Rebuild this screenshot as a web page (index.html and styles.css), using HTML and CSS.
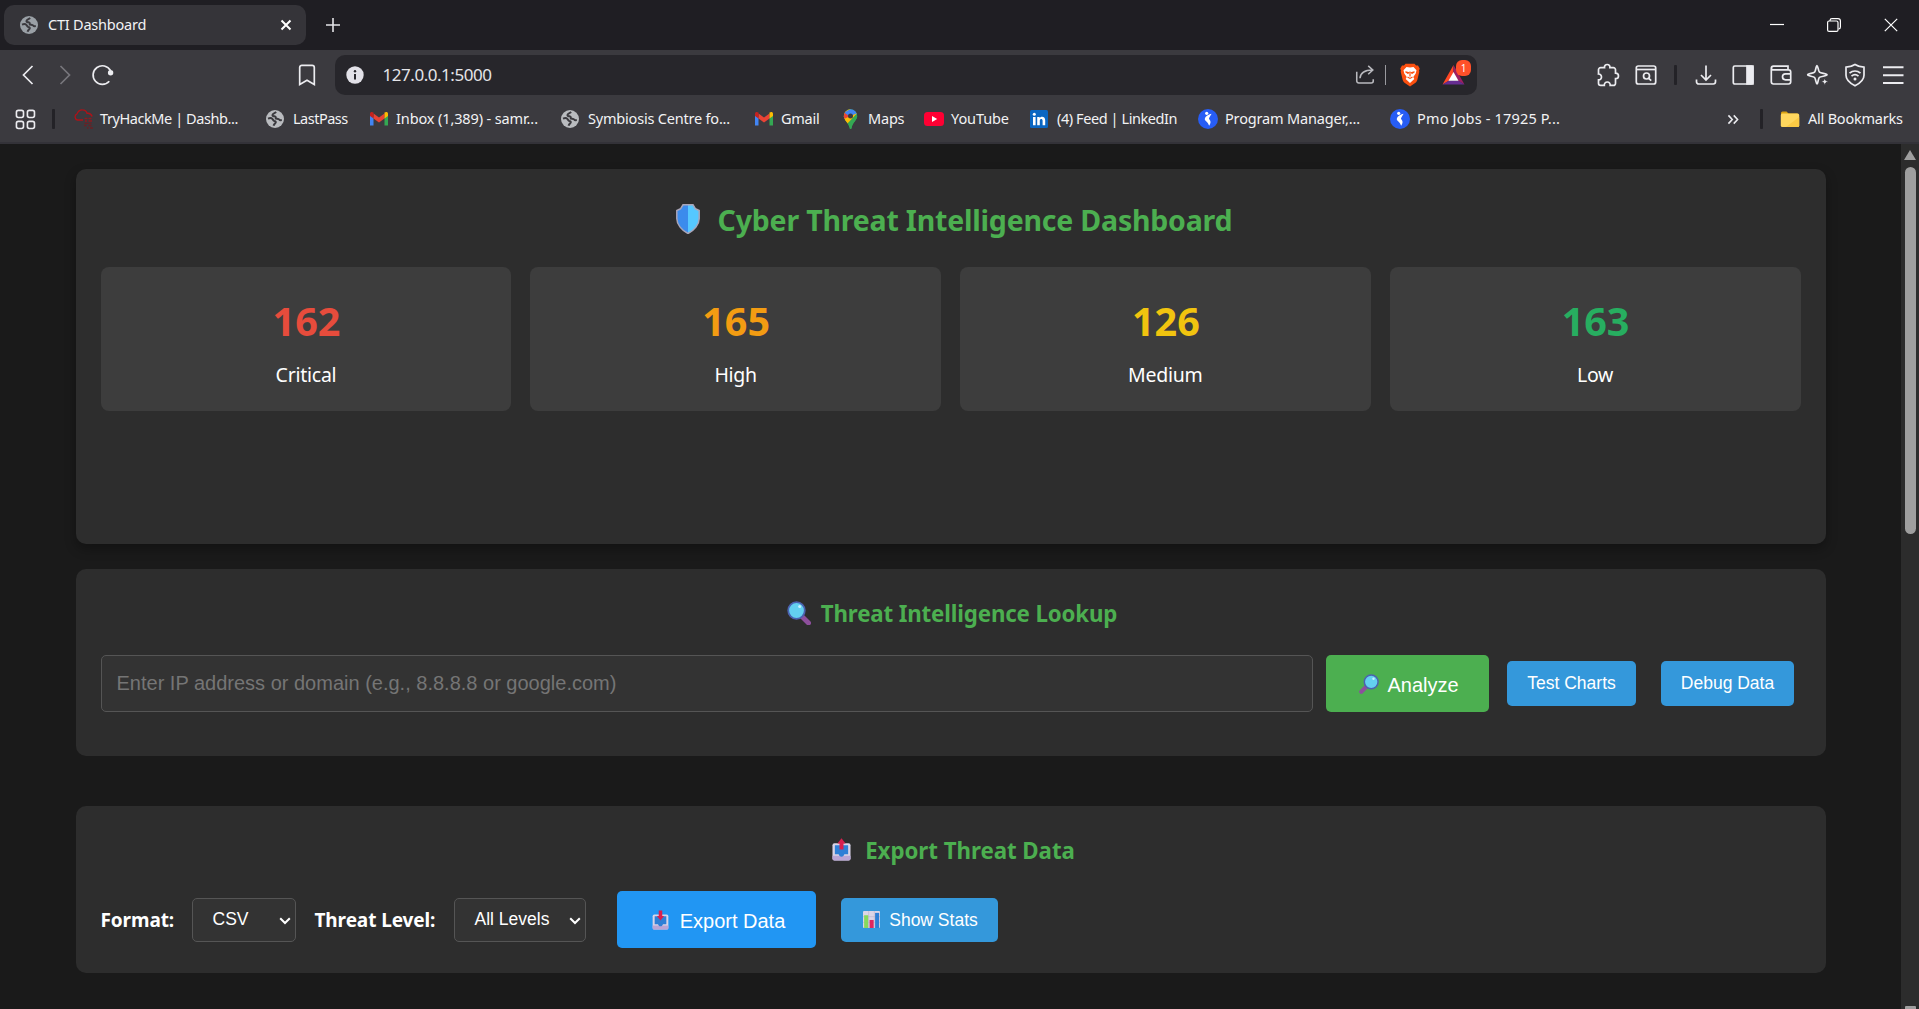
FILE: index.html
```html
<!DOCTYPE html>
<html lang="en">
<head>
<meta charset="utf-8">
<title>CTI Dashboard</title>
<link rel="stylesheet" href="styles.css">
</head>
<body>
<svg class="defs" aria-hidden="true">
  <symbol id="globe" viewBox="0 0 18 18"><circle cx="9" cy="9" r="9" fill="currentColor"/><path d="M10.2 2C8.700 3.200 7.200 3.300 6.600 4.600c-.5 1.200.6 1.700 1.900 1.700 1.200.1 1.400 1.100 1.300 2.200 1.600.3 2.700-.1 3.400 1 .5.9 1.600.8 2.600.6M2 8.600c1.500-.6 3.400-.7 4.400.3 1 .9.7 1.800 2 2 1.600.2 1.700 1.200.9 2.200-.7.9-1.400 1.200-1.700 2.700" fill="none" stroke="#3b3a3f" stroke-width="2"/></symbol>
  <symbol id="gmail" viewBox="0 0 20 16"><path d="M1 3v11.500h3.500V6L1 3z" fill="#4285f4"/><path d="M19 3v11.500h-3.500V6L19 3z" fill="#34a853"/><path d="M4.500 2.500v5L10 11.500l5.500-4v-5L10 6.600 4.500 2.500z" fill="#ea4335"/><path d="M1 2.500C1 1 3 .3 4.500 1.600v6L1 5V2.500z" fill="#c5221f"/><path d="M19 2.500C19 1 17 .3 15.500 1.600v6L19 5V2.500z" fill="#fbbc04"/></symbol>
  <symbol id="job" viewBox="0 0 20 20"><circle cx="10" cy="10" r="10" fill="#275df5"/><circle cx="8.700" cy="4.300" r="1.600" fill="#fff"/><path d="M13.500 4.800c-3.500.8-6.300 2.700-6.700 5-.2 1.500.9 2.300 2.300 3.400 1 .9 1.300 2.200 2.100 3.600 1.500-2.300 1.900-4.700.4-6.100-1.600-1.400.8-3.200 1.900-5.900z" fill="#fff"/></symbol>
  <symbol id="tray" viewBox="0 0 20 20"><rect x=".5" y="1.500" width="19" height="18" rx="2" fill="#d9d3e6"/><path d="M.5 14.500h19v3a2 2 0 0 1-2 2h-15a2 2 0 0 1-2-2z" fill="#b9a5d6"/><path d="M3 3.500h14V13h-4c-.5 1.500-1.500 2.500-3 2.500S7.500 14.500 7 13H3z" fill="#2e7fd6"/></symbol>
</svg>

<header class="browser">
  <div class="tabs">
    <div class="tab">
      <svg class="tab-icon"><use href="#globe"/></svg>
      <span class="tab-title">CTI Dashboard</span>
      <svg class="tab-close" viewBox="0 0 12 12"><path d="M1.500 1.500l9 9m0-9l-9 9"/></svg>
    </div>
    <svg class="tab-new" viewBox="0 0 14 14"><path d="M7 0v14M0 7h14"/></svg>
    <div class="win">
      <svg viewBox="0 0 14 14"><path d="M0 6.500h14"/></svg>
      <svg viewBox="0 0 14 14"><path d="M3 3V2.500A2 2 0 0 1 5 .6h6a2.400 2.400 0 0 1 2.400 2.400v6a2 2 0 0 1-1.900 2"/><rect x=".6" y="3" width="10.400" height="10.400" rx="1.500"/></svg>
      <svg viewBox="0 0 14 14"><path d="M.8.8l12.400 12.400m0-12.400L.8 13.200"/></svg>
    </div>
  </div>

  <div class="toolbar">
    <div class="nav">
      <svg class="ic" viewBox="0 0 24 24"><path d="M16.500 3L7.500 12l9 9"/></svg>
      <svg class="ic dim" viewBox="0 0 24 24"><path d="M7.500 3l9 9-9 9"/></svg>
      <svg class="ic" viewBox="0 0 24 24"><path d="M18.300 18.300A9.300 9.300 0 1 1 19.500 7.500"/><circle cx="19.600" cy="9.800" r="2.700" fill="currentColor" stroke="none"/></svg>
    </div>
    <svg class="ic mark" viewBox="0 0 24 24"><path d="M4.700 4.500A2.200 2.200 0 0 1 6.900 2.300h10.200a2.200 2.200 0 0 1 2.200 2.200v17L12 17.300 4.700 21.500z"/></svg>
    <div class="url">
      <svg class="info" viewBox="0 0 18 18"><circle cx="9" cy="9" r="8.700" fill="#e2e1e8"/><path d="M9 8v5.500" stroke="#27262b" stroke-width="2"/><circle cx="9" cy="5.300" r="1.200" fill="#27262b"/></svg>
      <span class="address">127.0.0.1:5000</span>
      <svg class="ic share" viewBox="0 0 24 24"><path d="M3 8.500V18.500A2.200 2.200 0 0 0 5.200 20.700h13.600a2.200 2.200 0 0 0 2.200-2.200v-2M6.500 15.500c.5-5 4.500-9 13.500-9M15.500 2l5 4.600-5 4.600"/></svg>
      <i class="url-sep"></i>
      <svg class="lion" viewBox="0 0 20 24"><path d="M5.500.8h9l1.500 1.800 2-.1 1.700 3-.7 2.300.3 1-2 8.200c-.3 1.200-1 2-1.800 2.700L10 23.500l-5.500-3.800c-.8-.7-1.500-1.500-1.800-2.700L.7 8.800l.3-1L.3 5.500l1.700-3 2 .1z" fill="#fb5010"/><path d="M6.500 3.900l3.500.7 3.500-.7 3 3.300-.8 3.200-2.400 3.600 1 2L10 20l-4.300-4 1-2-2.400-3.600L3.500 7.200z" fill="#fff"/><path d="M5.500 8.700l3 .9-.5.800zM14.500 8.700l-3 .9.500.8zM10 8.500v5M7.500 14l2.500 1.400 2.500-1.400" stroke="#fb5010" stroke-width="1.200" fill="none"/></svg>
      <div class="bat">
        <svg viewBox="0 0 22 20"><path d="M11 0L0 19.500l6.500-3.800L11 8z" fill="#ff4724"/><path d="M11 0l11 19.500-6.500-3.800L11 8z" fill="#9e1f63"/><path d="M0 19.500h22l-6.500-4h-9z" fill="#662d91"/><path d="M11 7l5 8.800H6z" fill="#fff"/></svg>
        <b>1</b>
      </div>
    </div>
    <div class="tools">
      <svg class="ic" viewBox="0 0 24 24"><path d="M2.500 6.800A2.200 2.200 0 0 1 4.700 4.600h3.800C8.200 2.600 9.500 1.500 11.200 1.500s3 1.100 2.700 3.100h3.400a2.200 2.200 0 0 1 2.200 2.200v3.400c2 0 3 1.200 3 2.700s-1 2.700-3 2.700v4.600a2 2 0 0 1-2.200 2.200h-3.100c.2-2-1-3.400-2.900-3.400s-3.200 1.400-3 3.400H4.700a2.200 2.200 0 0 1-2.200-2.200v-3.400c1.700.1 3-1.200 3-2.900s-1.300-3-3-2.900z"/></svg>
      <svg class="ic" viewBox="0 0 24 24"><rect x="2.300" y="3" width="19.400" height="18" rx="2"/><path d="M2.500 6.500h19"/><circle cx="12.500" cy="13" r="3"/><path d="M14.800 15.300l2.400 2.300"/></svg>
      <i class="sep"></i>
      <svg class="ic" viewBox="0 0 24 24"><path d="M12 2.500v14M7 12l5 5 5-5M2.500 16.500v2.300a2.200 2.200 0 0 0 2.200 2.200h14.600a2.200 2.200 0 0 0 2.200-2.200v-2.300"/></svg>
      <svg class="ic" viewBox="0 0 24 24"><rect x="2.300" y="3" width="19.400" height="18" rx="1.500"/><path d="M16 3h6v18h-6z" fill="currentColor"/></svg>
      <svg class="ic" viewBox="0 0 24 24"><path d="M2.300 5.500A2.300 2.300 0 0 1 4.500 3.200H19v3.300M2.300 5.200c0 1 1 1.600 2 1.600h15.200a2.200 2.200 0 0 1 2.200 2.200v9.800a2.200 2.200 0 0 1-2.200 2.200H4.500a2.200 2.200 0 0 1-2.200-2.200zM21.500 10.800H16.500a3 3 0 0 0 0 6h5"/></svg>
      <svg class="ic" viewBox="0 0 24 24"><path d="M11 2.500c1 0 1.200 5.500 2.500 6.700s7.500 1.400 7.500 2.600-6.500 1.500-7.700 2.700S12 21 11 21s-1.200-5.300-2.400-6.500S1.700 13 1.700 11.800s5.700-1.400 6.900-2.600S10 2.500 11 2.500z"/><path d="M18.800 14.500l1.100 3.100 3.100 1.100-3.100 1.100-1.100 3.200-1.100-3.200-3.100-1.100 3.100-1.100z" fill="currentColor" stroke="#3b3a3f" stroke-width="1"/></svg>
      <svg class="ic" viewBox="0 0 24 24"><path d="M12 1.500c3 2 6 2.600 9 2.700v8c0 4.500-4 8-9 10.500-5-2.500-9-6-9-10.500v-8c3-.1 6-.7 9-2.700zM6.500 10.200c3.300-2.900 7.700-2.900 11 0M8.500 13.200c2.200-1.900 4.800-1.900 7 0"/><circle cx="12" cy="16" r="1.500" fill="currentColor" stroke="none"/></svg>
      <svg class="ic menu" viewBox="0 0 24 24"><path d="M2 4.300h20.500M2 12.200h20.500M2 20h20.500"/></svg>
    </div>
  </div>

  <div class="bookmarks">
    <svg class="ic apps" viewBox="0 0 22 22"><rect x="1.500" y="1.500" width="7.400" height="7.400" rx="2"/><rect x="13" y="1.500" width="7.400" height="7.400" rx="2"/><rect x="1.500" y="13" width="7.400" height="7.400" rx="2"/><rect x="13" y="13" width="7.400" height="7.400" rx="2"/></svg>
    <i class="sep"></i>
    <div class="bm"><svg viewBox="0 0 20 20"><path d="M10 11H4.500A3.300 3.300 0 0 1 4 4.800C5 2.500 7 .8 9.300.9c2.700 0 4.200 1.400 4.700 3.400 2.500-.3 4.300 1 5.200 3.300" fill="none" stroke="#b01218" stroke-width="1.300"/><path d="M11.500 9.500h3m1 0h3M12 12h2m1.500 0H19" stroke="#8f1a1f" stroke-width="1.600"/><path d="M11.500 14.300h4m1 0h2M11 16.500h2.500m2 0h3M14 19h1.500m1.500 0h3" stroke="#6a2024" stroke-width="1.300"/></svg><span class="t1">TryHackMe | Dashb...</span></div>
    <div class="bm"><svg class="g"><use href="#globe"/></svg><span class="t2">LastPass</span></div>
    <div class="bm"><svg><use href="#gmail"/></svg><span class="t3">Inbox (1,389) - samr...</span></div>
    <div class="bm"><svg class="g"><use href="#globe"/></svg><span class="t4">Symbiosis Centre fo...</span></div>
    <div class="bm"><svg><use href="#gmail"/></svg><span class="t5">Gmail</span></div>
    <div class="bm"><svg viewBox="0 0 20 20"><clipPath id="pin"><path d="M9.500.3a6.700 6.700 0 0 1 6.700 6.700c0 4-4.600 6.500-5.700 12a1 1 0 0 1-2 0C7.400 13.500 2.800 11 2.800 7A6.700 6.700 0 0 1 9.500.3z"/></clipPath><g clip-path="url(#pin)"><path d="M0 0h20v20H0z" fill="#34a853"/><path d="M0 0h9.500v7L5 13 0 12z" fill="#fbbc04"/><path d="M0 3l4-1 5.500 5L3 10H0z" fill="#ea4335"/><path d="M3 3.500L9.500 0H20v4.500L9.500 8z" fill="#4285f4"/><path d="M16.500 4L5.500 15.500 3 11l6.500-4z" fill="#fbbc04"/><path d="M16.500 4l-9.500 11 3 5h8V4z" fill="#34a853"/></g><circle cx="9.500" cy="7" r="2.500" fill="#3b3a3f"/></svg><span class="t6">Maps</span></div>
    <div class="bm"><svg viewBox="0 0 20 20"><rect y="3" width="20" height="14" rx="3.500" fill="#ff0033"/><path d="M8 7l5.200 3L8 13z" fill="#fff"/></svg><span class="t7">YouTube</span></div>
    <div class="bm"><svg viewBox="0 0 20 20"><rect y="1" width="18" height="18" rx="1.500" fill="#0a66c2"/><path d="M3 8h2.600v8.200H3zM7.200 8h2.500v1.200c1.300-2.300 5.500-1.900 5.500 2v5h-2.600v-4.500c0-2.200-2.800-2.100-2.800 0v4.500H7.200z" fill="#fff"/><circle cx="4.300" cy="5.200" r="1.500" fill="#fff"/></svg><span class="t8">(4) Feed | LinkedIn</span></div>
    <div class="bm"><svg><use href="#job"/></svg><span class="t9">Program Manager,...</span></div>
    <div class="bm"><svg><use href="#job"/></svg><span class="t10">Pmo Jobs - 17925 P...</span></div>
    <svg class="ic more" viewBox="0 0 12 12"><path d="M1 1.500L5.200 6 1 10.500M6.800 1.500L11 6l-4.200 4.500"/></svg>
    <i class="sep"></i>
    <div class="bm all"><svg viewBox="0 0 20 20"><path d="M1 4a1.500 1.500 0 0 1 1.500-1.500h4L8.500 4.500h9V8H1z" fill="#d9a213"/><rect x=".8" y="4.500" width="18.400" height="13.500" rx="1.500" fill="#ffd75e"/><path d="M19.200 8v8.500a1.500 1.500 0 0 1-1.500 1.500H6z" fill="#fbca45"/></svg><span class="t11">All Bookmarks</span></div>
  </div>
</header>

<div class="viewport">
  <main class="page">
    <section class="card summary">
      <h1><svg class="shield" viewBox="0 0 24 30"><path d="M7 .8h10l2.500 4L23.200 6.500v8c0 6-5 12-11.200 15C5.800 26.500.8 20.500.8 14.500v-8L4.500 4.800z" fill="#3b8bec"/><path d="M12 .8h5l2.500 4L23.200 6.500v8c0 6-5 12-11.200 15z" fill="#55c8ff"/><path d="M7 .8h10l2.500 4L23.200 6.500v8c0 6-5 12-11.200 15C5.800 26.500.8 20.500.8 14.500v-8L4.500 4.800z" fill="none" stroke="#a9a5b8" stroke-width="1.500"/></svg><span>Cyber Threat Intelligence Dashboard</span></h1>
      <div class="stats">
        <div class="stat critical"><strong>162</strong><span>Critical</span></div>
        <div class="stat high"><strong>165</strong><span>High</span></div>
        <div class="stat medium"><strong>126</strong><span>Medium</span></div>
        <div class="stat low"><strong>163</strong><span>Low</span></div>
      </div>
    </section>

    <section class="card lookup">
      <h2><svg class="lens" viewBox="0 0 24 24"><path d="M15.500 16l6 6" stroke="#8d4f9c" stroke-width="5" stroke-linecap="round"/><circle cx="9.500" cy="9.500" r="8.300" fill="#63d0f0" stroke="#4b62b0" stroke-width="1.800"/><circle cx="12.700" cy="5.500" r="1.500" fill="#c8f2ff"/></svg><span>Threat Intelligence Lookup</span></h2>
      <div class="row">
        <input type="text" placeholder="Enter IP address or domain (e.g., 8.8.8.8 or google.com)">
        <button class="btn analyze"><svg viewBox="0 0 20 20"><path d="M6.500 13.500L2.300 17.700" stroke="#8d4f9c" stroke-width="4.200" stroke-linecap="round"/><circle cx="12.200" cy="7.800" r="6.900" fill="#63d0f0" stroke="#4b62b0" stroke-width="1.500"/><circle cx="14.500" cy="4.700" r="1.200" fill="#c8f2ff"/></svg>Analyze</button>
        <button class="btn small test">Test Charts</button>
        <button class="btn small debug">Debug Data</button>
      </div>
    </section>

    <section class="card export">
      <h2><svg class="outbox" viewBox="0 0 20 24"><use href="#tray" y="4" width="20" height="20"/><path d="M10 .2l4.300 5.500h-2.200V12H7.900V5.700H5.700z" fill="#d81f4e"/></svg><span>Export Threat Data</span></h2>
      <div class="row">
        <label class="l-format">Format:</label>
        <div class="select csv"><span>CSV</span><svg viewBox="0 0 12 8"><path d="M1.200 1.200L6 6l4.800-4.800"/></svg></div>
        <label class="l-level">Threat Level:</label>
        <div class="select levels"><span>All Levels</span><svg viewBox="0 0 12 8"><path d="M1.200 1.200L6 6l4.800-4.800"/></svg></div>
        <button class="btn data"><svg viewBox="0 0 20 24"><use href="#tray" y="4" width="20" height="20"/><path d="M10 12.500l4.300-5.200h-2.200V.5H7.900v6.800H5.700z" fill="#d81f4e"/></svg>Export Data</button>
        <button class="btn small show"><svg viewBox="0 0 18 18"><rect width="18" height="18" rx="1" fill="#dcd5e6"/><path d="M0 6h18M0 12h18M6 0v18M12 0v18" stroke="#b9b0c9" stroke-width=".6"/><rect x="1.200" y="4.500" width="4.300" height="13.500" fill="#86d95c"/><rect x="7" y="9.500" width="4.300" height="8.500" fill="#e0245e"/><rect x="12.800" y="2" width="4.300" height="16" fill="#2e7fd6"/></svg>Show Stats</button>
      </div>
    </section>
  </main>
  <aside class="scroll"><i class="up"></i><i class="thumb"></i><i class="down"></i></aside>
</div>
</body>
</html>
```
FILE: styles.css
```css
* { box-sizing: border-box; }
body {
  margin: 0;
  width: 1919px;
  height: 1009px;
  overflow: hidden;
  background: #1a1a1a;
  color: #fff;
  font-family: "Noto Sans", "Open Sans", sans-serif;
}
svg { display: block; flex: none; }
i { display: block; }
.defs { position: absolute; width: 0; height: 0; }

/* browser chrome */
.browser {
  height: 144px;
  background: #3b3a3f;
  border-bottom: 2px solid #333238;
  color: #f2f2f4;
  font-size: 14.5px;
}
.tabs { display: flex; align-items: center; height: 50px; background: #1f1e23; padding-left: 4px; }
.tab {
  display: flex;
  align-items: center;
  width: 302px;
  height: 40px;
  padding: 0 14px 0 16px;
  border-radius: 10px;
  background: #353439;
}
.tab-icon { width: 18px; height: 18px; margin-right: 10px; color: #9aa0a6; }
.tab-title { flex: 1; padding-bottom: 2px; white-space: nowrap; letter-spacing: -.22px; }
.tab-close { width: 12px; height: 12px; stroke: #fff; stroke-width: 2; }
.tab-new { width: 14px; height: 14px; margin-left: 20px; stroke: #e4e4e8; stroke-width: 1.6; }
.win { display: flex; gap: 43px; margin-left: auto; padding-right: 21px; }
.win svg { width: 14px; height: 14px; fill: none; stroke: #fff; stroke-width: 1.2; }

.ic { width: 24px; height: 24px; fill: none; stroke: currentColor; stroke-width: 1.7; color: #ececf0; }
.dim { color: #77767c; }
.sep { width: 3px; height: 20px; border-radius: 1px; background: #232227; }
.toolbar { display: flex; align-items: center; height: 50px; padding-left: 15.5px; }
.nav { display: flex; gap: 13.5px; }
.mark { margin-left: 180px; }
.url {
  display: flex;
  align-items: center;
  width: 1142px;
  height: 40px;
  margin-left: 16.5px;
  padding-left: 11px;
  border-radius: 10px;
  background: #27262b;
}
.info { width: 18px; height: 18px; }
.address { margin-left: 18.5px; padding-bottom: 2px; font-size: 17px; letter-spacing: -.46px; color: #e4e4e8; flex: 1; }
.share { color: #b9b9be; width: 22px; }
.url-sep { width: 1px; height: 20px; background: #9a9a9f; margin: 0 14px 0 9px; }
.lion { width: 20px; height: 24px; }
.bat { position: relative; margin: 0 12px 0 22px; }
.bat svg { width: 23px; height: 20px; }
.bat b {
  position: absolute;
  left: 14px;
  top: -5px;
  width: 15px;
  height: 16px;
  border-radius: 6px;
  background: #ff5029;
  color: #fff;
  font-size: 10px;
  font-weight: 400;
  line-height: 16px;
  text-align: center;
}
.tools {
  display: grid;
  grid-template-columns: 37.5px 40.5px 20px 36.5px 38px 37px 37.5px 37.5px 24px;
  align-items: center;
  margin-left: 119px;
}
.menu { stroke-width: 2; }

.bookmarks {
  display: grid;
  grid-template-columns: 37px 21px 193px 103px 192px 193px 87px 83px 106px 168px 192px 337px 33px 20px 1fr;
  align-items: center;
  height: 38px;
  padding-left: 15px;
}
.apps { width: 21px; height: 21px; }
.more { width: 12px; height: 11px; }
.bm { display: flex; align-items: center; gap: 7px; white-space: nowrap; }
.bm span { padding-bottom: 2px; }
.bm svg { width: 20px; height: 20px; }
.bm svg.g { width: 18px; height: 18px; margin-right: 2px; color: #b9bbbf; }
.bm.all { gap: 8px; }
.t1 { letter-spacing: -.42px; }
.t2 { letter-spacing: -.5px; }
.t3 { letter-spacing: -.12px; }
.t4 { letter-spacing: -.2px; }
.t5 { letter-spacing: -.25px; }
.t6 { letter-spacing: -.2px; }
.t7 { letter-spacing: -.1px; }
.t8 { letter-spacing: -.42px; }
.t9 { letter-spacing: -.16px; }
.t10 { letter-spacing: .17px; }
.t11 { letter-spacing: -.22px; }

/* page */
.viewport { display: flex; height: 865px; }
.page { width: 1901px; padding: 25px 75.5px 0; }
.card { padding: 25px; border-radius: 10px; background: #2d2d2d; }
.summary { height: 374.5px; box-shadow: 0 5px 12px rgba(0, 0, 0, .3); }
.lookup { height: 187px; margin-top: 25px; }
.export { height: 167px; margin-top: 50px; }
h1, h2 { display: flex; justify-content: center; align-items: center; margin: 0; color: #4caf50; white-space: nowrap; }
h1 { height: 49px; font-size: 28.5px; letter-spacing: -.2px; margin-bottom: 24px; }
h2 { height: 38px; font-size: 22.3px; letter-spacing: -.15px; margin-bottom: 23px; }
h1 span, h2 span { padding-top: 2px; }
.export h2 { letter-spacing: -.05px; margin-bottom: 22px; }
.shield { width: 24px; height: 30px; margin: 0 18px 0 7px; }
.lens { width: 24px; height: 24px; margin: 0 10px 0 3px; }
.outbox { width: 19px; height: 23px; margin: 0 14px 0 6px; }

.stats { display: grid; grid-template-columns: repeat(4, 1fr); gap: 18.75px; }
.stat {
  display: flex;
  flex-direction: column;
  align-items: center;
  gap: 13px;
  height: 144px;
  padding-top: 27px;
  border-radius: 8px;
  background: #3d3d3d;
}
.stat strong { font-size: 39.5px; line-height: 54px; padding-left: 1px; }
.stat span { font-size: 19.5px; line-height: 27px; letter-spacing: -.25px; }
.critical strong { color: #e74c3c; }
.high strong { color: #f39c12; }
.medium strong { color: #f1c40f; }
.low strong { color: #27ae60; }

.row { display: flex; align-items: center; height: 57px; font-size: 20px; white-space: nowrap; }
.lookup .row { padding-right: 6.5px; }
input {
  flex: 1;
  height: 57px;
  padding: 0 15px;
  border: 1px solid #555;
  border-radius: 5px;
  background: #333;
  color: #fff;
  font: 20px "Liberation Sans", Arial, sans-serif;
}
input::placeholder { color: #757575; }
.btn {
  display: flex;
  justify-content: center;
  align-items: center;
  height: 57px;
  padding: 0;
  border: 0;
  border-radius: 5px;
  color: #fff;
  font: 20px "Liberation Sans", Arial, sans-serif;
}
.small { height: 45px; font-size: 17.5px; background: #3498db; }
.analyze { width: 163px; margin: 0 18px 0 13px; background: #4caf50; padding: 4px 0 0 3px; }
.analyze svg { width: 20px; height: 20px; margin: 0 8px 3px 0; }
.test { width: 129px; margin-right: 25px; }
.debug { width: 133px; }
label { padding-top: 2px; font-weight: 700; font-size: 19px; letter-spacing: -.1px; }
.l-format { width: 91px; }
.l-level { width: 139px; }
.select {
  display: flex;
  justify-content: space-between;
  align-items: center;
  height: 44px;
  margin-top: 1px;
  padding: 0 4px 0 20px;
  border: 1px solid #555;
  border-radius: 5px;
  background: #333;
  font: 17.5px "Liberation Sans", Arial, sans-serif;
}
.select svg { width: 12px; height: 8px; margin-top: 2px; fill: none; stroke: #fff; stroke-width: 2; }
.csv { width: 104px; margin-right: 19px; }
.levels { width: 132px; margin-right: 31px; }
.data { width: 199px; margin-right: 25px; background: #2196f3; padding: 4px 0 0 5px; }
.data svg { width: 17px; height: 20px; margin: 0 11px 2px 0; }
.show { width: 157px; height: 44px; margin-top: 1px; padding: 2px 0 0 3px; }
.show svg { width: 17px; height: 17px; margin: 0 9px 2px 0; }

.scroll { display: flex; flex-direction: column; align-items: center; width: 18px; padding-top: 6px; background: #2c2c2c; overflow: hidden; }
.up { width: 12px; height: 10px; background: #9f9f9f; clip-path: polygon(50% 0, 100% 100%, 0 100%); }
.thumb { width: 11px; height: 367px; margin-top: 7px; border-radius: 6px; background: #9f9f9f; }
.down { width: 11px; height: 3px; margin-top: 472px; border-radius: 1px 1px 0 0; background: #9f9f9f; }
```
